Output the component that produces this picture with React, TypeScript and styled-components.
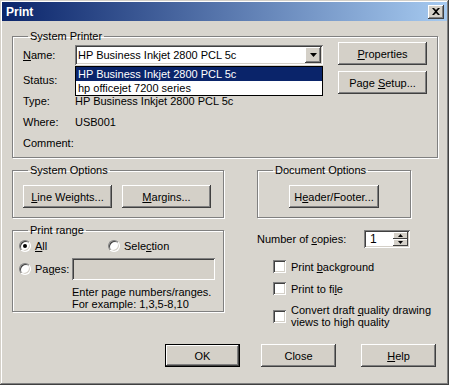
import React from "react";
import styled, { createGlobalStyle } from "styled-components";

const GlobalStyle = createGlobalStyle`
  html, body {
    margin: 0;
    padding: 0;
    background: #ffffff;
  }
  body {
    font-family: "Liberation Sans", Arial, sans-serif;
    font-size: 11px;
    color: #000;
  }
`;

const face = "#d4d0c8";
const raised = `inset -1px -1px #404040, inset 1px 1px #ffffff, inset -2px -2px #808080, inset 2px 2px ${face}`;
const sunken = `inset 1px 1px #808080, inset -1px -1px #ffffff, inset 2px 2px #404040, inset -2px -2px ${face}`;

const Window = styled.div`
  width: 449px;
  height: 385px;
  box-sizing: border-box;
  padding: 2px;
  background: #d8d5ce;
  box-shadow: inset -1px -1px #404040, inset 1px 1px ${face}, inset -2px -2px #808080, inset 2px 2px #ffffff;
  display: flex;
  flex-direction: column;
`;

const TitleBar = styled.div`
  height: 19px;
  flex: none;
  display: flex;
  align-items: center;
  justify-content: space-between;
  padding: 0 3px 0 4px;
  background: linear-gradient(to right, #0a246a, #a6caf0);
`;

const Title = styled.span`
  color: #fff;
  font-weight: bold;
  font-size: 12px;
`;

const CloseBox = styled.div`
  width: 16px;
  height: 14px;
  background: ${face};
  box-shadow: ${raised};
  display: flex;
  align-items: center;
  justify-content: center;
`;

const Body = styled.div`
  flex: 1;
  padding: 9px 9px 0 10px;
  display: flex;
  flex-direction: column;
`;

const Group = styled.fieldset<{ $w?: number }>`
  margin: 0;
  min-width: 0;
  box-sizing: border-box;
  width: ${p => (p.$w ? `${p.$w}px` : "auto")};
  border: 1px solid #808080;
  box-shadow: inset 1px 1px #ffffff, 1px 1px #ffffff;
  padding: 0 10px;
`;

const Legend = styled.legend`
  padding: 0 2px;
  margin-left: 5px;
  line-height: 12px;
`;

const PrinterBody = styled.div`
  display: flex;
  padding-bottom: 3px;
`;

const InfoCol = styled.div`
  flex: 1;
  display: flex;
  flex-direction: column;
`;

const NameRow = styled.div`
  display: flex;
  align-items: center;
  height: 20px;
  margin: 3px 0 5px;
`;

const InfoRow = styled.div`
  display: flex;
  height: 21px;
  line-height: 21px;
`;

const Label = styled.span`
  width: 52px;
  flex: none;
`;

const Combo = styled.div`
  position: relative;
  width: 248px;
  height: 20px;
  box-sizing: border-box;
  background: #fff;
  box-shadow: ${sunken};
  display: flex;
  align-items: center;
  padding: 0 2px 0 3px;
`;

const ComboText = styled.span`
  flex: 1;
  white-space: nowrap;
  overflow: hidden;
`;

const ArrowBtn = styled.div`
  width: 16px;
  height: 16px;
  background: ${face};
  box-shadow: ${raised};
  display: flex;
  align-items: center;
  justify-content: center;
`;

const DropList = styled.div`
  position: absolute;
  left: 0;
  top: 21px;
  width: 248px;
  box-sizing: border-box;
  border: 1px solid #000;
  background: #fff;
  z-index: 2;
`;

const DropItem = styled.div<{ $sel?: boolean }>`
  height: 14px;
  line-height: 14px;
  padding-left: 2px;
  background: ${p => (p.$sel ? "#0a246a" : "#fff")};
  color: ${p => (p.$sel ? "#fff" : "#000")};
  white-space: nowrap;
`;

const ButtonCol = styled.div`
  display: flex;
  flex-direction: column;
  gap: 6px;
  margin-left: 15px;
`;

const Button = styled.div<{ $w?: number; $default?: boolean }>`
  width: ${p => p.$w ?? 89}px;
  height: 23px;
  box-sizing: border-box;
  background: ${face};
  box-shadow: ${p =>
    p.$default
      ? `inset 0 0 0 1px #000, inset -2px -2px #404040, inset 2px 2px #ffffff, inset -3px -3px #808080`
      : raised};
  display: flex;
  align-items: center;
  justify-content: center;
  flex: none;
`;

const GroupRow = styled.div<{ $top: number }>`
  display: flex;
  align-items: flex-start;
  margin-top: ${p => p.$top}px;
`;

const OptionsBody = styled.div<{ $center?: boolean }>`
  display: flex;
  gap: 10px;
  justify-content: ${p => (p.$center ? "center" : "flex-start")};
  padding: 9px 0 9px;
`;

const RangeBody = styled.div`
  display: flex;
  flex-direction: column;
  padding: 2px 0 1px;
  margin-left: -4px;
`;

const RadioRow = styled.div`
  display: flex;
  align-items: center;
  height: 16px;
`;

const RadioItem = styled.label<{ $w?: number }>`
  display: flex;
  align-items: center;
  gap: 4px;
  flex: none;
  width: ${p => (p.$w ? `${p.$w}px` : "auto")};
`;

const Radio = styled.span<{ $on?: boolean }>`
  width: 12px;
  height: 12px;
  box-sizing: border-box;
  border-radius: 50%;
  background: #fff;
  border: 1px solid;
  border-color: #808080 #ffffff #ffffff #808080;
  box-shadow: inset 1px 1px #404040, inset -1px -1px ${face};
  display: flex;
  align-items: center;
  justify-content: center;
  &::after {
    content: "";
    width: 4px;
    height: 4px;
    border-radius: 50%;
    background: ${p => (p.$on ? "#000" : "transparent")};
  }
`;

const PagesRow = styled.div`
  display: flex;
  align-items: center;
  margin-top: 4px;
  height: 22px;
`;

const TextBox = styled.div<{ $w: number; $h: number }>`
  width: ${p => p.$w}px;
  height: ${p => p.$h}px;
  box-sizing: border-box;
  box-shadow: ${sunken};
  background: ${face};
  flex: none;
`;

const Hint = styled.div`
  margin: 6px 0 0 53px;
  line-height: 12px;
  white-space: nowrap;
`;

const RightCol = styled.div`
  margin-left: 33px;
  display: flex;
  flex-direction: column;
`;

const CopiesRow = styled.div`
  display: flex;
  align-items: center;
  justify-content: space-between;
  width: 153px;
  margin-top: 6px;
`;

const Spinner = styled.div`
  width: 46px;
  height: 18px;
  box-sizing: border-box;
  background: #fff;
  box-shadow: ${sunken};
  display: flex;
  align-items: center;
  padding: 2px 2px 2px 6px;
`;

const SpinValue = styled.span`
  flex: 1;
  font-size: 12px;
`;

const SpinBtns = styled.div`
  width: 15px;
  height: 14px;
  display: flex;
  flex-direction: column;
`;

const SpinBtn = styled.div`
  flex: 1;
  background: ${face};
  box-shadow: inset -1px -1px #404040, inset 1px 1px #ffffff;
  display: flex;
  align-items: center;
  justify-content: center;
`;

const CheckList = styled.div`
  margin: 12px 0 0 16px;
  display: flex;
  flex-direction: column;
  gap: 9px;
`;

const CheckItem = styled.label`
  display: flex;
  align-items: center;
  gap: 5px;
  line-height: 12px;
`;

const Check = styled.span`
  width: 13px;
  height: 13px;
  box-sizing: border-box;
  flex: none;
  background: #fff;
  box-shadow: ${sunken};
`;

const Footer = styled.div`
  display: flex;
  justify-content: flex-end;
  margin-top: auto;
  margin-bottom: 16px;
  padding-right: 2px;
  gap: 21px;
  & > *:last-child {
    margin-left: 4px;
  }
`;

const U = styled.u`
  text-decoration: underline;
  text-underline-offset: 1px;
`;

const Tri = ({ up }: { up?: boolean }) => (
  <svg width="7" height="4" viewBox="0 0 7 4">
    <path d={up ? "M3.5 0 L7 4 L0 4 Z" : "M0 0 L7 0 L3.5 4 Z"} fill="#000" />
  </svg>
);

const SmallTri = ({ up }: { up?: boolean }) => (
  <svg width="5" height="3" viewBox="0 0 5 3">
    <path d={up ? "M2.5 0 L5 3 L0 3 Z" : "M0 0 L5 0 L2.5 3 Z"} fill="#000" />
  </svg>
);

export default function App() {
  return (
    <>
      <GlobalStyle />
      <Window>
        <TitleBar>
          <Title>Print</Title>
          <CloseBox>
            <svg width="8" height="7" viewBox="0 0 8 7">
              <path d="M0 0 L2 0 L4 2 L6 0 L8 0 L5 3.5 L8 7 L6 7 L4 5 L2 7 L0 7 L3 3.5 Z" fill="#000" />
            </svg>
          </CloseBox>
        </TitleBar>
        <Body>
          <Group>
            <Legend>System Printer</Legend>
            <PrinterBody>
              <InfoCol>
                <NameRow>
                  <Label>
                    <U>N</U>ame:
                  </Label>
                  <Combo>
                    <ComboText>HP Business Inkjet 2800 PCL 5c</ComboText>
                    <ArrowBtn>
                      <Tri />
                    </ArrowBtn>
                    <DropList>
                      <DropItem $sel>HP Business Inkjet 2800 PCL 5c</DropItem>
                      <DropItem>hp officejet 7200 series</DropItem>
                    </DropList>
                  </Combo>
                </NameRow>
                <InfoRow>
                  <Label>Status:</Label>
                </InfoRow>
                <InfoRow>
                  <Label>Type:</Label>
                  <span>HP Business Inkjet 2800 PCL 5c</span>
                </InfoRow>
                <InfoRow>
                  <Label>Where:</Label>
                  <span>USB001</span>
                </InfoRow>
                <InfoRow>
                  <Label>Comment:</Label>
                </InfoRow>
              </InfoCol>
              <ButtonCol>
                <Button>
                  <span>
                    <U>P</U>roperties
                  </span>
                </Button>
                <Button>
                  <span>
                    Page <U>S</U>etup...
                  </span>
                </Button>
              </ButtonCol>
            </PrinterBody>
          </Group>

          <GroupRow $top={6}>
            <Group $w={212}>
              <Legend>System Options</Legend>
              <OptionsBody>
                <Button>
                  <span>
                    <U>L</U>ine Weights...
                  </span>
                </Button>
                <Button>
                  <span>
                    <U>M</U>argins...
                  </span>
                </Button>
              </OptionsBody>
            </Group>
            <Group $w={154} style={{ marginLeft: 33 }}>
              <Legend>Document Options</Legend>
              <OptionsBody $center>
                <Button $w={90}>
                  <span>
                    H<U>e</U>ader/Footer...
                  </span>
                </Button>
              </OptionsBody>
            </Group>
          </GroupRow>

          <GroupRow $top={6}>
            <Group $w={212}>
              <Legend>Print range</Legend>
              <RangeBody>
                <RadioRow>
                  <RadioItem $w={89}>
                    <Radio $on />
                    <span>
                      <U>A</U>ll
                    </span>
                  </RadioItem>
                  <RadioItem>
                    <Radio />
                    <span>
                      Sele<U>c</U>tion
                    </span>
                  </RadioItem>
                </RadioRow>
                <PagesRow>
                  <RadioItem $w={53}>
                    <Radio />
                    <span>
                      Pa<U>g</U>es:
                    </span>
                  </RadioItem>
                  <TextBox $w={143} $h={22} />
                </PagesRow>
                <Hint>
                  Enter page numbers/ranges.
                  <br />
                  For example: 1,3,5-8,10
                </Hint>
              </RangeBody>
            </Group>
            <RightCol>
              <CopiesRow>
                <span>
                  Number of <U>c</U>opies:
                </span>
                <Spinner>
                  <SpinValue>1</SpinValue>
                  <SpinBtns>
                    <SpinBtn>
                      <SmallTri up />
                    </SpinBtn>
                    <SpinBtn>
                      <SmallTri />
                    </SpinBtn>
                  </SpinBtns>
                </Spinner>
              </CopiesRow>
              <CheckList>
                <CheckItem>
                  <Check />
                  <span>
                    Print <U>b</U>ackground
                  </span>
                </CheckItem>
                <CheckItem>
                  <Check />
                  <span>
                    Print to fi<U>l</U>e
                  </span>
                </CheckItem>
                <CheckItem>
                  <Check />
                  <span>
                    Convert draft <U>q</U>uality drawing
                    <br />
                    views to high quality
                  </span>
                </CheckItem>
              </CheckList>
            </RightCol>
          </GroupRow>

          <Footer>
            <Button $w={75} $default>
              OK
            </Button>
            <Button $w={75}>Close</Button>
            <Button $w={75}>
              <span>
                <U>H</U>elp
              </span>
            </Button>
          </Footer>
        </Body>
      </Window>
    </>
  );
}
